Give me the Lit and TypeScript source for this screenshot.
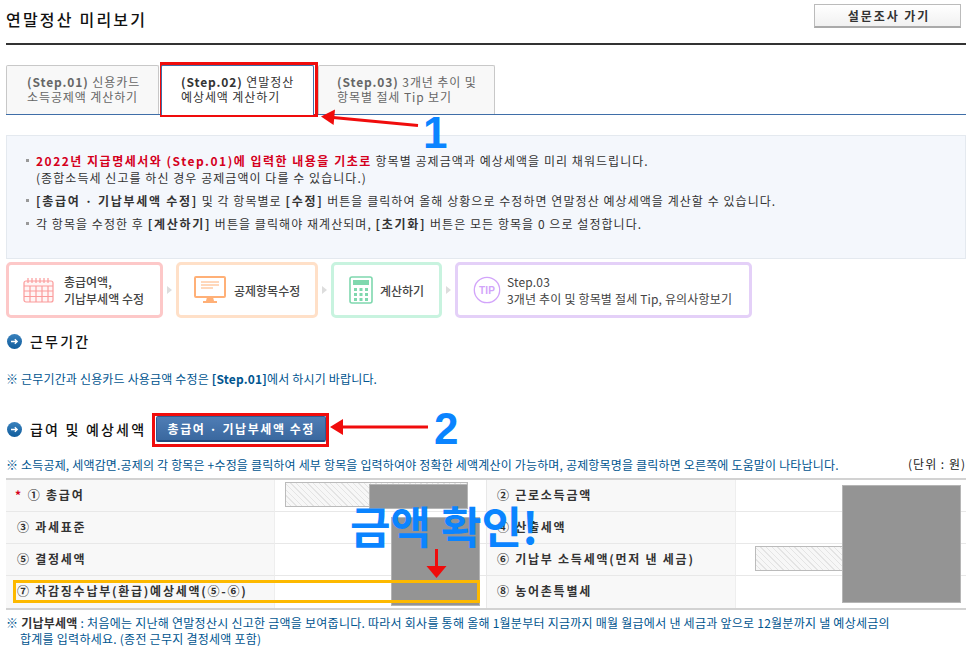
import { LitElement, html, css, svg } from "lit";
import { customElement } from "lit/decorators.js";

const rows: [string, string, string, string][] = [
  ["① 총급여", "input", "② 근로소득금액", ""],
  ["③ 과세표준", "", "④ 산출세액", ""],
  ["⑤ 결정세액", "", "⑥ 기납부 소득세액(먼저 낸 세금)", "input"],
  ["⑦ 차감징수납부(환급)예상세액(⑤-⑥)", "", "⑧ 농어촌특별세", ""],
];

@customElement("app-root")
export class AppRoot extends LitElement {
  static styles = css`
    :host { display: block; width: 974px; height: 652px; overflow: hidden; background: #fff; position: relative;
      font-family: "Noto Sans CJK KR", "Liberation Sans", sans-serif; font-size: 12px; color: #333; }
    .page { padding: 0 8px 0 6px; display: flex; flex-direction: column; }
    .top { height: 43px; border-bottom: 2px solid #333; display: flex; justify-content: space-between; align-items: flex-start; }
    h1 { margin: 8px 0 0; font-size: 16px; line-height: 22px; font-weight: 500; color: #111; letter-spacing: 2.2px; }
    .survey { margin: 4px 5px 0 0; width: 147px; height: 24px; box-sizing: border-box; border: 1px solid #bbb; border-bottom: 2px solid #aaa; background: linear-gradient(#fff, #f1f1f1);
      font: 700 12px "Noto Sans CJK KR", sans-serif; color: #333; letter-spacing: 1.9px; padding: 0 0 0 3px; }
    .tabs { margin-top: 20px; height: 49px; border-bottom: 1px solid #3f6ea8; display: flex; gap: 2px; }
    .tab { box-sizing: border-box; height: 49px; border: 1px solid #c8c8c8; border-bottom: none; background: #f8f8f8; color: #666; line-height: 15px; padding: 8px 0 0 20px; border-radius: 2px 2px 0 0; letter-spacing: .9px; white-space: nowrap; }
    .t1 { width: 153px; }
    .t2 { width: 153px; background: #fff; color: #333; padding-left: 19px; height: 50px; border: 1px solid #3f6ea8; border-bottom: none; z-index: 1; }
    .t3 { width: 177px; margin-left: 2px; padding-left: 18px; }
    .info { margin-top: 20px; height: 124px; box-sizing: border-box; background: #f4f7fc; border: 1px solid #e4e9ef; padding: 16px 20px 0 19px; display: flex; flex-direction: column; gap: 6px; color: #333; }
    .info p { margin: 0; line-height: 17px; padding-left: 10px; position: relative; letter-spacing: 1.05px; white-space: nowrap; }
    .info p::before { content: ""; position: absolute; left: 0; top: 7px; width: 3px; height: 3px; background: #999; }
    .info .red { color: #d5001c; font-weight: 700; letter-spacing: 1.5px; }
    .info b { color: #333; font-weight: 700; letter-spacing: 1.7px; }
    .steps { margin-top: 3px; display: flex; height: 56px; align-items: stretch; }
    .step { box-sizing: border-box; border: 3px solid; border-radius: 5px; display: flex; align-items: center; gap: 9px; color: #444; font-size: 12px; line-height: 17px; padding-left: 14px; font-weight: 500; white-space: nowrap; }
    .s1 { width: 157px; border-color: #fdc8c8; }
    .s2 { width: 142px; border-color: #ffe0c8; padding-left: 15px; gap: 8px; }
    .s3 { width: 111px; border-color: #c8f3df; padding-left: 15px; gap: 7px; }
    .s4 { width: 297px; border-color: #e4d0f8; padding-left: 15px; gap: 6px; font-weight: 400; letter-spacing: .17px; }
    .sep { width: 13px; display: flex; align-items: center; justify-content: center; }
    .sep i { display: block; border-left: 5px solid #ddd; border-top: 4px solid transparent; border-bottom: 4px solid transparent; }
    .sec { display: flex; align-items: center; gap: 7px; font-size: 14px; font-weight: 500; color: #111; letter-spacing: 2.2px; line-height: 20px; white-space: nowrap; }
    .s-a { margin-top: 13px; }
    .note { color: #00558f; line-height: 16px; letter-spacing: .17px; white-space: nowrap; }
    .n-a { margin-top: 20px; }
    .s-b { margin-top: 25px; height: 34px; }
    .edit { margin-left: 3px; width: 170px; height: 26px; border: 1px solid #2f5a94; border-bottom: 2px solid #234a7d; border-radius: 2px; padding: 0; background: linear-gradient(#4f7db5, #3a689f); color: #fff; font: 700 12px "Noto Sans CJK KR", sans-serif; letter-spacing: 1.55px; }
    .n-head { margin-top: 11px; display: flex; justify-content: space-between; align-items: flex-start; height: 21px; }
    .unit { color: #222; margin: -1px 0 0 0; letter-spacing: 1px; line-height: 15px; white-space: nowrap; }
    .grid { display: grid; grid-template-columns: 268px 212px 249px 231px; grid-auto-rows: 32px; border-top: 2px solid #d2d2d2; border-bottom: 2px solid #d2d2d2; box-sizing: border-box; height: 132px; width: 960px; }
    .th { background: #f8f8f8; display: flex; align-items: center; font-weight: 700; color: #333; letter-spacing: 1.75px; padding: 0 0 3px 7px; border-bottom: 1px solid #e8e8e8; box-sizing: border-box; white-space: nowrap; }
    .th.r { border-left: 1px solid #e8e8e8; padding-left: 10px; }
    .th.l { padding-left: 11px; }
    .td { border-bottom: 1px solid #e8e8e8; border-left: 1px solid #eee; box-sizing: border-box; display: flex; align-items: center; padding: 0 0 3px 10px; }
    .th.last, .td.last { border-bottom: none; }
    .star { color: #d5001c; margin-right: 5px; margin-left: -2px; }
    .in { display: block; box-sizing: border-box; width: 183px; height: 25px; border: 1px solid #bbb; background: repeating-linear-gradient(45deg, #f7f7f7 0 3px, #e4e4e4 3px 4px); }
    .in.r { width: 205px; margin-left: 9px; }
    .foot { margin: 5px 0 0; padding-left: 14px; text-indent: -14px; line-height: 16px; color: #00558f; letter-spacing: .25px; white-space: nowrap; }
    .foot b { color: #333; }
    .over { position: absolute; }
    .redbox { border: 3px solid #f00c0c; box-sizing: border-box; }
    .grey { background: #949494; border: 1px solid #b5b5b5; box-sizing: border-box; }
    .yellow { border: 3px solid #fdb900; box-sizing: border-box; }
    .big { position: absolute; color: #0a84ff; font-family: "Liberation Sans", sans-serif; font-weight: 700; font-size: 44px; line-height: 44px; }
    .msg { font-family: "Noto Sans CJK KR", sans-serif; font-size: 44px; letter-spacing: 0; white-space: nowrap; font-weight: 700; line-height: 50px; }
    svg.a { position: absolute; left: 0; top: 0; pointer-events: none; }
  `;

  private bullet() {
    return html`<svg width="17" height="17" viewBox="0 0 17 17"><defs><linearGradient id="bl" x1="0" y1="0" x2="0" y2="1"><stop offset="0" stop-color="#3a82bd"/><stop offset="1" stop-color="#0f5c9c"/></linearGradient></defs><circle cx="8.5" cy="8.5" r="7.5" fill="url(#bl)"/><path d="M5 8.5h6M8.8 6.200l2.400 2.300-2.400 2.300" fill="none" stroke="#fff" stroke-width="1.300"/></svg>`;
  }

  render() {
    return html`
      <div class="page">
        <header class="top"><h1>연말정산 미리보기</h1><button class="survey">설문조사 가기</button></header>
        <nav class="tabs">
          <div class="tab t1"><b>(Step.01)</b> 신용카드<br />소득공제액 계산하기</div>
          <div class="tab t2"><b>(Step.02)</b> 연말정산<br />예상세액 계산하기</div>
          <div class="tab t3"><b>(Step.03)</b> 3개년 추이 및<br />항목별 절세 Tip 보기</div>
        </nav>
        <section class="info">
          <p><span class="red">2022년 지급명세서와 (Step.01)에 입력한 내용을 기초로</span> 항목별 공제금액과 예상세액을 미리 채워드립니다.<br />(종합소득세 신고를 하신 경우 공제금액이 다를 수 있습니다.)</p>
          <p><b>[총급여 · 기납부세액 수정]</b> 및 각 항목별로 <b>[수정]</b> 버튼을 클릭하여 올해 상황으로 수정하면 연말정산 예상세액을 계산할 수 있습니다.</p>
          <p>각 항목을 수정한 후 <b>[계산하기]</b> 버튼을 클릭해야 재계산되며, <b>[초기화]</b> 버튼은 모든 항목을 0 으로 설정합니다.</p>
        </section>
        <section class="steps">
          <div class="step s1">
            <svg width="32" height="26" viewBox="0 0 32 26" fill="none" stroke="#fb9c9c" stroke-width="1.200"><rect x="1" y="4" width="29" height="21" rx="2" fill="#fff5f5"/><path d="M1 9h29M1 14h29M1 19.500h29M7 9v16M13 9v16M19 9v16M25 9v16M5 1v5M9 1v5M13 1v5M17 1v5M21 1v5M25 1v5"/></svg>
            <span>총급여액,<br />기납부세액 수정</span>
          </div>
          <div class="sep"><i></i></div>
          <div class="step s2">
            <svg width="32" height="28" viewBox="0 0 32 28"><rect x="1" y="1" width="30" height="20" rx="1" fill="#fff" stroke="#ffb077" stroke-width="2"/><path d="M7 6h18M7 9h18M7 12h12" stroke="#ffb077"/><path d="M13 21h6l1 4h3v2H9v-2h3z" fill="#ffb077"/></svg>
            <span>공제항목수정</span>
          </div>
          <div class="sep"><i></i></div>
          <div class="step s3">
            <svg width="24" height="28" viewBox="0 0 24 28"><rect x="1" y="1" width="22" height="26" rx="2" fill="#fff" stroke="#7fd8ae" stroke-width="1.600"/><rect x="4" y="4" width="16" height="5" fill="#7fd8ae"/><g fill="#7fd8ae"><rect x="5" y="12" width="3" height="3"/><rect x="10.500" y="12" width="3" height="3"/><rect x="16" y="12" width="3" height="3"/><rect x="5" y="17" width="3" height="3"/><rect x="10.500" y="17" width="3" height="3"/><rect x="16" y="17" width="3" height="3"/><rect x="5" y="22" width="3" height="3"/><rect x="10.500" y="22" width="3" height="3"/><rect x="16" y="22" width="3" height="3"/></g></svg>
            <span>계산하기</span>
          </div>
          <div class="sep"><i></i></div>
          <div class="step s4">
            <svg width="28" height="28" viewBox="0 0 28 28"><circle cx="14" cy="14" r="12.700" fill="#fff" stroke="#d2a4fa" stroke-width="1.300"/><text x="14" y="18" text-anchor="middle" font-family="Liberation Sans, sans-serif" font-size="10" font-weight="700" fill="#d2a4fa">TIP</text></svg>
            <span>Step.03<br />3개년 추이 및 항목별 절세 Tip, 유의사항보기</span>
          </div>
        </section>
        <div class="sec s-a">${this.bullet()}<span>근무기간</span></div>
        <div class="note n-a">※ 근무기간과 신용카드 사용금액 수정은 <b>[Step.01]</b>에서 하시기 바랍니다.</div>
        <div class="sec s-b">${this.bullet()}<span>급여 및 예상세액</span><button class="edit">총급여 · 기납부세액 수정</button></div>
        <div class="n-head"><span class="note">※ 소득공제, 세액감면.공제의 각 항목은 +수정을 클릭하여 세부 항목을 입력하여야 정확한 세액계산이 가능하며, 공제항목명을 클릭하면 오른쪽에 도움말이 나타납니다.</span><span class="unit">(단위 : 원)</span></div>
        <div class="grid">
          ${rows.map((r, i) => {
            const last = i === rows.length - 1 ? "last" : "";
            return html`
              <div class="th l ${last}">${i === 0 ? html`<span class="star">*</span>` : ""}${r[0]}</div>
              <div class="td ${last}">${r[1] ? html`<span class="in"></span>` : ""}</div>
              <div class="th r ${last}">${r[2]}</div>
              <div class="td ${last}">${r[3] ? html`<span class="in r"></span>` : ""}</div>`;
          })}
        </div>
        <p class="foot">※ <b>기납부세액</b> : 처음에는 지난해 연말정산시 신고한 금액을 보여줍니다. 따라서 회사를 통해 올해 1월분부터 지금까지 매월 월급에서 낸 세금과 앞으로 12월분까지 낼 예상세금의<br />합계를 입력하세요. (종전 근무지 결정세액 포함)</p>
      </div>

      <div class="over grey" style="left:369px;top:484px;width:99px;height:25px"></div>
      <div class="over grey" style="left:391px;top:517px;width:89px;height:89px"></div>
      <div class="over grey" style="left:842px;top:485px;width:119px;height:118px"></div>
      <div class="over redbox" style="left:160px;top:62px;width:158px;height:55px"></div>
      <div class="over redbox" style="left:152px;top:413px;width:177px;height:34px"></div>
      <div class="over yellow" style="left:13px;top:580px;width:467px;height:23px"></div>
      <svg class="a" width="974" height="652">
        ${svg`<path d="M418 125.500 333 117.500" stroke="#f00c0c" stroke-width="3" fill="none"/><path d="M321 116.500l14-7-1.400 15.500z" fill="#f00c0c"/>`}
        ${svg`<path d="M428 427H340" stroke="#f00c0c" stroke-width="3" fill="none"/><path d="M330 427l13-8v16z" fill="#f00c0c"/>`}
        ${svg`<path d="M436.500 549V568" stroke="#f00c0c" stroke-width="3" fill="none"/><path d="M426.500 566h20l-10 12z" fill="#f00c0c"/>`}
      </svg>
      <div class="big" style="left:423px;top:111px">1</div>
      <div class="big" style="left:434px;top:407px">2</div>
      <div class="big msg" style="left:350px;top:500px">금액 확인!</div>
    `;
  }
}
